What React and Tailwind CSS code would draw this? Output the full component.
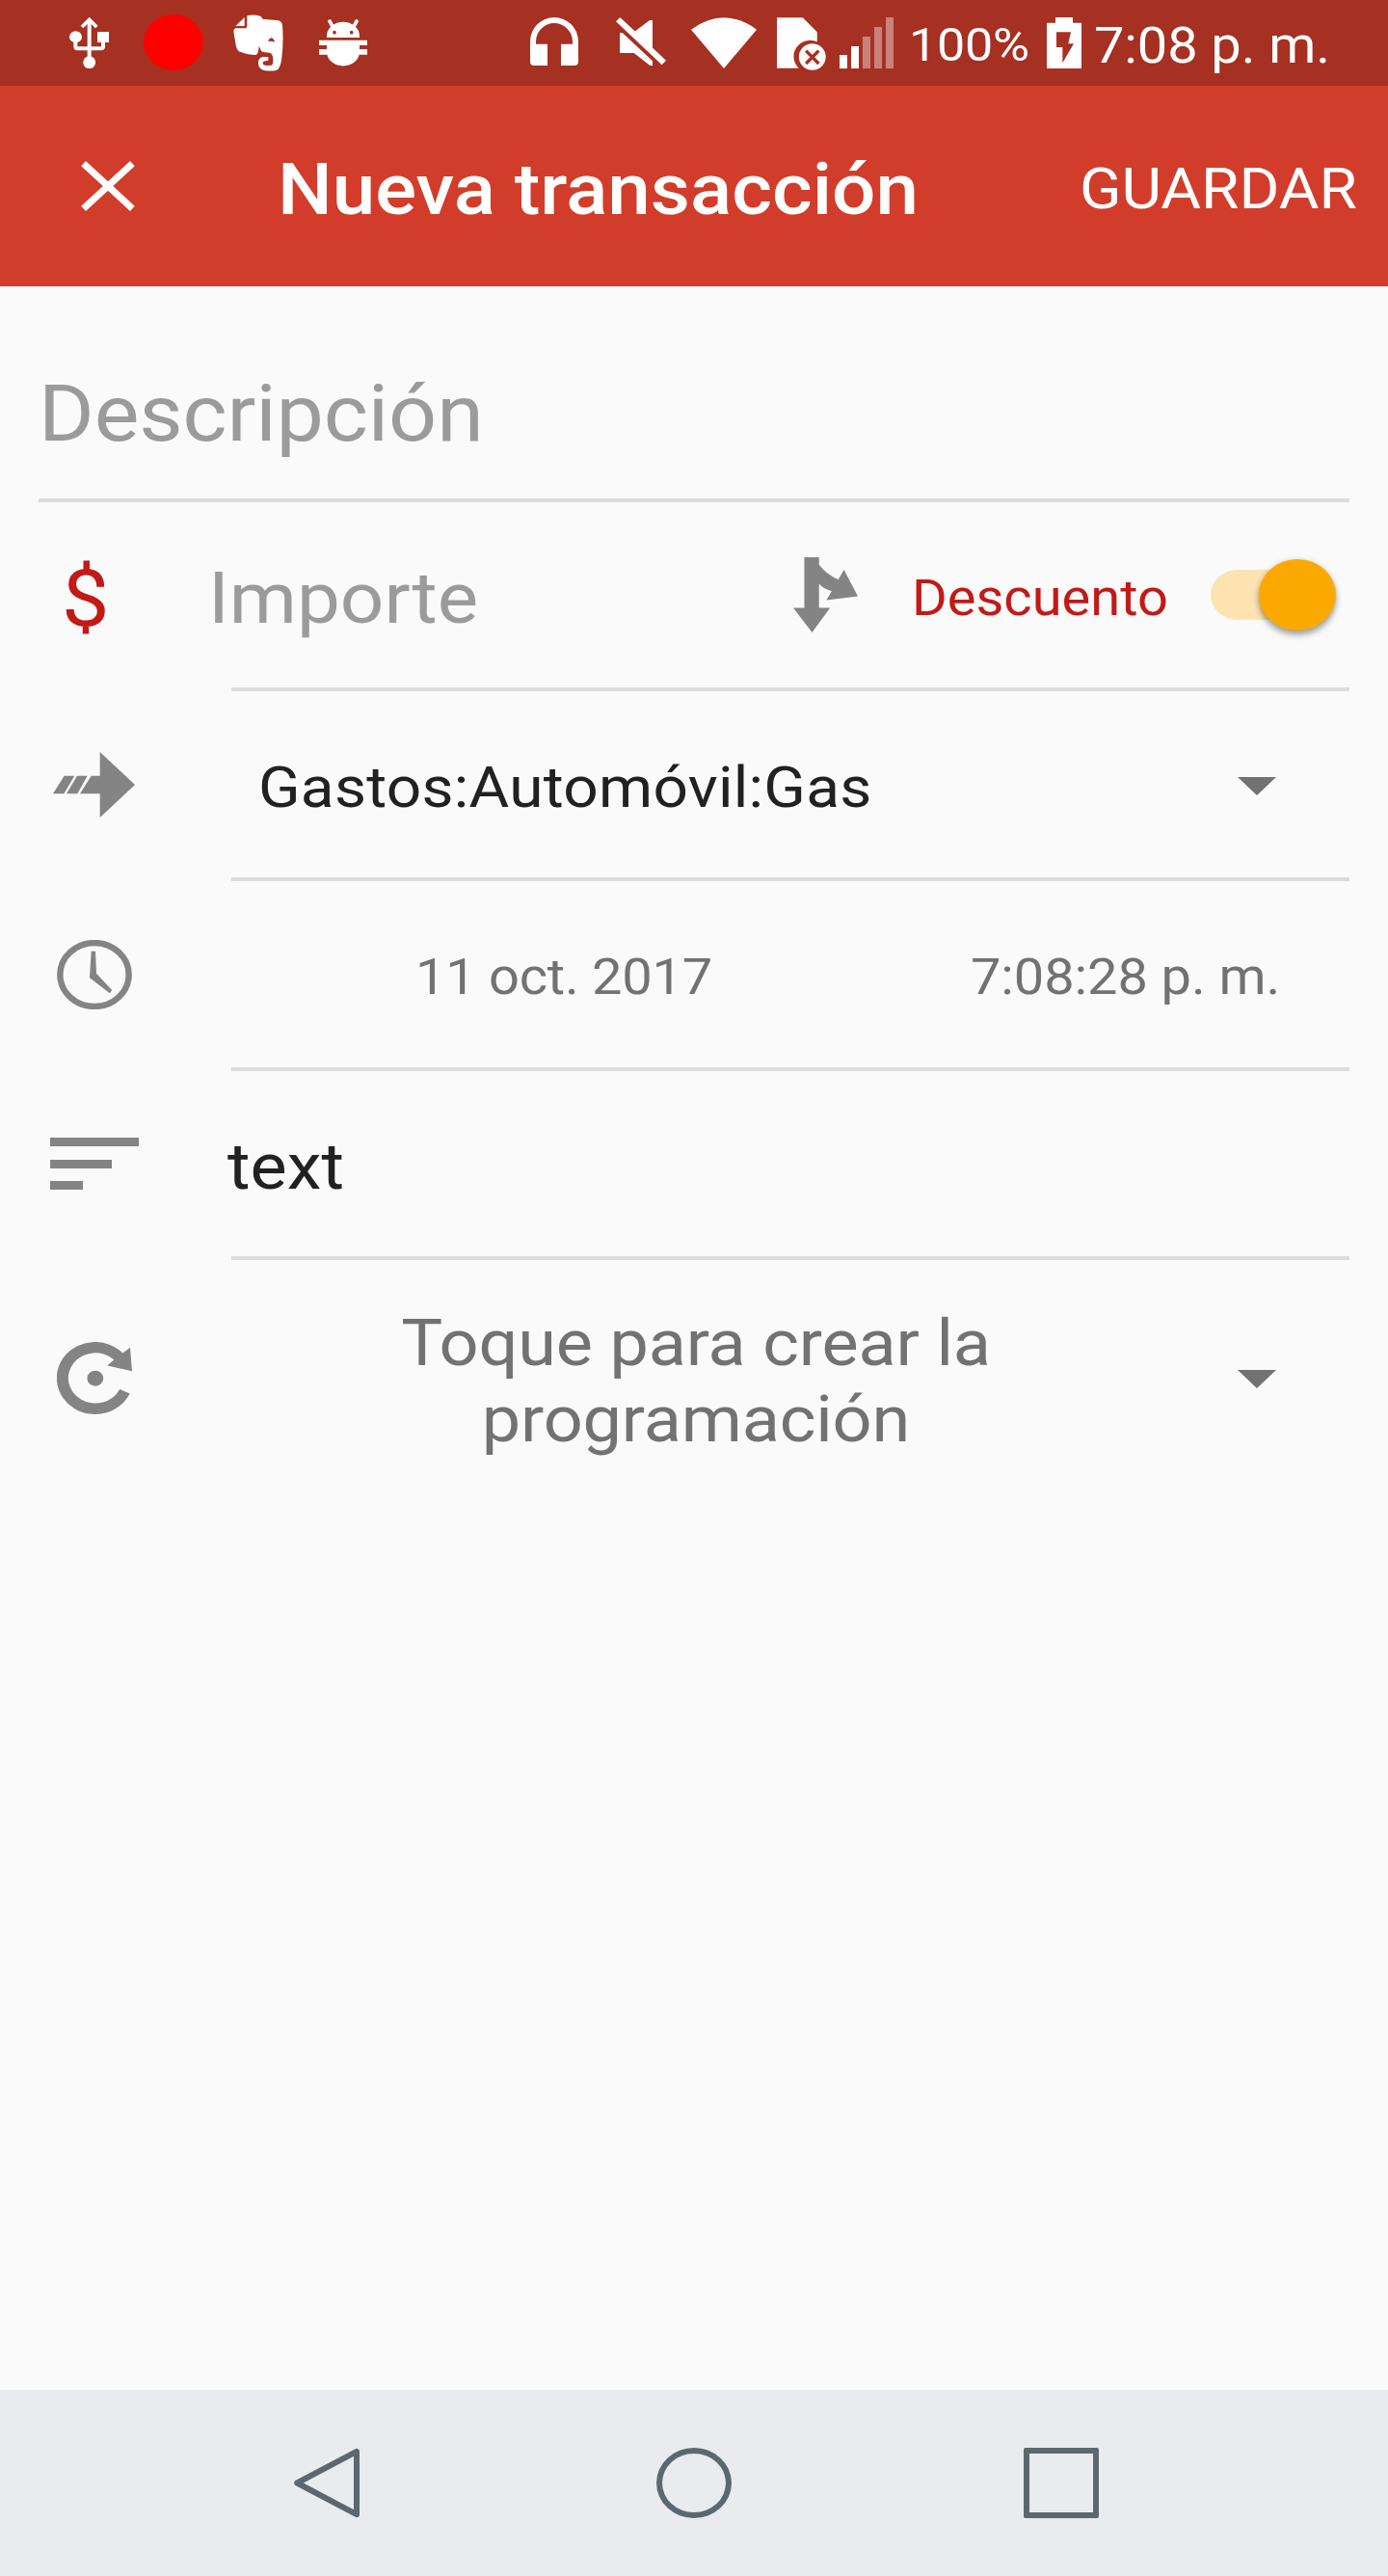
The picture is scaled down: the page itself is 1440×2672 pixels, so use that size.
import React from "react";

// Text is drawn slightly flattened: full-width glyphs, 92.8% height.
function Label({ className = "", children }) {
  return (
    <span className={"block shrink-0 scale-y-[0.928] whitespace-nowrap " + className}>{children}</span>
  );
}

function Icon({ box, className = "", children }) {
  return (
    <svg viewBox={box} preserveAspectRatio="none" fill="currentColor" className={"block shrink-0 " + className}>
      {children}
    </svg>
  );
}

function StatusBar() {
  return (
    <header className="flex h-[89px] items-start bg-[#a63021] text-white">
      <Icon box="66 54 123 159" className="ml-[72px] mt-[18px] h-[53px] w-[41px]">
        <path d="M122 66h12v120h-12z" />
        <path d="M105 84L128 61L151 84" fill="none" stroke="currentColor" strokeWidth="11" />
        <ellipse cx="85.5" cy="115" rx="19.5" ry="18" />
        <path d="M153 99h36v33h-36z" />
        <path d="M85 120V145Q85 151 92 151H164Q171 151 171 145V120" fill="none" stroke="currentColor" strokeWidth="12" />
        <ellipse cx="128" cy="194" rx="19.5" ry="19" />
      </Icon>
      <div className="ml-[36px] mt-[15px] h-[58px] w-[62px] rounded-[50%] bg-[#ff0000]" />
      <Icon box="576 45 156 177" className="ml-[31px] mt-[15px] h-[59px] w-[52px]">
        <path d="M583 81L611 54V81Z" />
        <path
          fillRule="evenodd"
          d="M619 49Q640 44 660 50Q666 53 667 59L717 64Q727 67 729 78Q733 130 727 180Q723 214 710 219Q690 222 672 219Q655 215 654 199Q652 180 668 177H685V188L675 190Q667 191 668 199Q670 204 682 204L695 203Q700 200 700 185Q700 168 690 164Q670 164 663 159L656 143L654 158Q652 170 645 171Q618 170 600 162Q588 160 584 140L577 98Q577 89 583 88H612Q619 88 619 81ZM685 127Q688 118 695 118Q702 119 705 131Q696 127 685 129Z"
        />
      </Icon>
      <Icon box="843 60 150 147" className="ml-[37px] mt-[20px] h-[49px] w-[50px]">
        <path d="M876 66L888 88M960 66L948 88" stroke="currentColor" strokeWidth="11" strokeLinecap="round" />
        <path d="M867 117V112A51 44 0 0 1 969 112V117Z" />
        <circle cx="891" cy="101" r="5.5" fill="#a63021" />
        <circle cx="944" cy="101" r="5.5" fill="#a63021" />
        <path d="M843 125H993V141H969V153H993V170H968A51 44 0 0 1 868 170H843V153H867V141H843Z" />
      </Icon>
      <Icon box="60 55 150 149" className="ml-[169px] mt-[18px] h-[50px] w-[50px]">
        <path d="M60 192V130A75 75 0 0 1 210 130V192Q210 204 198 204H156V138H192V130A57 57 0 0 0 78 130V138H114V204H72Q60 204 60 192Z" />
      </Icon>
      <Icon box="327 54 156 150" className="ml-[39px] mt-[18px] h-[50px] w-[52px]">
        <path d="M340 54L327 67L470 202L483 188Z" />
        <path d="M385 98L432 63H441V150Z" />
        <path d="M339 102H347L441 190V204H433L383 165H339Z" />
      </Icon>
      <Icon box="560 54 206 159" className="ml-[26px] mt-[18px] h-[53px] w-[68px]">
        <path d="M560 92Q663 18 766 92L663 213Z" />
      </Icon>
      <Icon box="828 54 154 165" className="ml-[21px] mt-[18px] h-[55px] w-[51px]">
        <path d="M828 55H909L954 100V130A52 50 0 0 0 897 212H828Z" />
        <ellipse cx="939" cy="177" rx="42" ry="41" />
        <path d="M919 158L959 198M959 158L919 198" stroke="#a63021" strokeWidth="10" />
      </Icon>
      <div className="ml-[14px] mt-[18px] flex h-[53px] w-[56px] items-end justify-between">
        <div className="h-[14px] w-[8px] bg-white" />
        <div className="h-[23px] w-[8px] bg-white" />
        <div className="h-[33px] w-[8px] bg-white/40" />
        <div className="h-[43px] w-[8px] bg-white/40" />
        <div className="h-[53px] w-[8px] bg-white/40" />
      </div>
      <div className="ml-[16px] mt-[16px] w-[143px]">
        <Label className="text-[52px] leading-[61px] tracking-[-0.2px]">100%</Label>
      </div>
      <Icon box="498 55 108 157" className="mt-[18px] h-[53px] w-[36px]">
        <path
          fillRule="evenodd"
          d="M525 55H579V72H606V212H498V72H525ZM528 100V147H547V195L582 136H565L573 100Z"
        />
      </Icon>
      <div className="ml-[13px] mt-[14px]">
        <Label className="text-[56px] leading-[66px] tracking-[-0.1px]">7:08 p. m.</Label>
      </div>
    </header>
  );
}

function AppBar() {
  return (
    <div className="flex h-[208px] items-center bg-[#d13d2a] text-white">
      <Icon box="0 0 56 52" className="ml-[84px] h-[52px] w-[56px]">
        <path d="M2.6 2.6L53.4 49.4M53.4 2.6L2.6 49.4" stroke="currentColor" strokeWidth="7" />
      </Icon>
      <h1 className="ml-[148px] grow pt-[8px]">
        <Label className="text-[80px] font-medium leading-[94px]">Nueva transacción</Label>
      </h1>
      <button className="mr-[32px] pt-[7px]">
        <Label className="text-[64px] leading-[75px]">GUARDAR</Label>
      </button>
    </div>
  );
}

function Caret({ className = "" }) {
  return (
    <Icon box="0 0 40 19" className={"h-[19px] w-[40px] " + className}>
      <path d="M0 0H40L20 19Z" />
    </Icon>
  );
}

function Divider({ className = "" }) {
  return <div className={"mr-10 h-[4px] bg-[#dcdcdc] " + className} />;
}

function Toggle() {
  return (
    <div className="relative h-[74px] w-[130px] shrink-0">
      <div className="absolute left-0 top-[11px] h-[52px] w-[124px] rounded-[28px/26px] bg-[#fde3b1]" />
      <div className="absolute right-0 top-0 h-[74px] w-[80px] rounded-[50%] bg-[#fba901] shadow-[0_5px_6px_rgba(0,0,0,0.32),0_0_6px_rgba(0,0,0,0.12)]" />
    </div>
  );
}

function Form() {
  return (
    <main className="h-[2182px] text-[#727272]">
      <div className="flex h-[220px] items-center pl-10 pt-[43px] text-[#9b9b9b]">
        <Label className="text-[88px] leading-[104px] tracking-[-0.1px]">Descripción</Label>
      </div>
      <Divider className="ml-10" />

      <div className="flex h-[192px] items-center">
        <div className="ml-[64px] w-[152px] pt-[8px] text-[#c11a17]">
          <Label className="text-[88px] leading-[104px]">$</Label>
        </div>
        <div className="w-[607px] pt-[8px] text-[#9b9b9b]">
          <Label className="text-[80px] leading-[94px]">Importe</Label>
        </div>
        <Icon box="102 113 158 235" className="h-[78px] w-[67px] text-[#848484]">
          <path d="M129 113H165V136Q182 165 212 183L226 152L260 235L183 247L196 219Q176 212 165 196V271H192L148 348L102 271H129Z" />
        </Icon>
        <div className="ml-[56px] w-[310px] pt-[5px] text-[#c11a17]">
          <Label className="text-[56px] leading-[66px]">Descuento</Label>
        </div>
        <Toggle />
      </div>
      <Divider className="ml-[240px]" />

      <div className="flex h-[193px] items-center">
        <Icon box="166 119 255 204" className="ml-[55px] h-[68px] w-[85px] text-[#848484]">
          <path d="M312 119L421 221L312 323V249H250L285 193H312Z" />
          <path d="M201 193H233L200 249H166Z" />
          <path d="M241 193H273L242 249H208Z" />
        </Icon>
        <div className="ml-[128px] w-[1016px] pt-[8px] text-[#212121]">
          <Label className="text-[64px] leading-[75px] tracking-[0.25px]">Gastos:Automóvil:Gas</Label>
        </div>
        <Caret className="mt-[4px]" />
      </div>
      <Divider className="ml-[240px]" />

      <div className="flex h-[193px] items-center">
        <Icon box="178 703 232 215" className="ml-[59px] h-[72px] w-[78px] text-[#848484]">
          <ellipse cx="294" cy="810.5" rx="106" ry="98.5" fill="none" stroke="currentColor" strokeWidth="19" />
          <path d="M284 738H297L300 807L348 858L341 868L279 820Z" />
        </Icon>
        <div className="ml-[294px] w-[576px] pt-[5px]">
          <Label className="text-[56px] leading-[66px] tracking-[-0.25px]">11 oct. 2017</Label>
        </div>
        <div className="pt-[5px]">
          <Label className="text-[56px] leading-[66px] tracking-[-0.1px]">7:08:28 p. m.</Label>
        </div>
      </div>
      <Divider className="ml-[240px]" />

      <div className="flex h-[192px] items-center">
        <div className="ml-[52px] flex h-[54px] w-[92px] flex-col justify-between">
          <div className="h-[9px] w-[92px] bg-[#848484]" />
          <div className="h-[9px] w-[64px] bg-[#848484]" />
          <div className="h-[9px] w-[34px] bg-[#848484]" />
        </div>
        <div className="ml-[92px] pt-[8px] text-[#212121]">
          <Label className="text-[72px] leading-[84px]">text</Label>
        </div>
      </div>
      <Divider className="ml-[240px]" />

      <div className="flex h-[246px] items-center">
        <Icon box="178 334 233 224" className="ml-[59px] mt-[-2px] h-[75px] w-[78px] text-[#848484]">
          <path d="M404 494A119 112 0 1 1 382 368L405 351L411 424L334 407L355 389A84 78 0 1 0 373 480Z" />
          <ellipse cx="297" cy="446.5" rx="25" ry="24" />
        </Icon>
        <div className="ml-[103px] w-[964px] pt-[5px] text-center">
          <Label className="text-[72px] leading-[85px] tracking-[-0.15px]">
            Toque para crear la
            <br />
            programación
          </Label>
        </div>
        <Caret className="ml-[80px]" />
      </div>
    </main>
  );
}

function NavigationBar() {
  return (
    <nav className="flex h-[193px] items-start bg-[#e9ebef] pt-[60px] text-[#5b6870]">
      <Icon box="0 0 68 73" className="ml-[305px] h-[73px] w-[68px]">
        <path d="M65 3.8V69.2L3.2 36.5Z" fill="none" stroke="currentColor" strokeWidth="6" strokeLinejoin="round" />
      </Icon>
      <div className="ml-[308px] h-[73px] w-[78px] rounded-[50%] border-[6px] border-[#5b6870]" />
      <div className="ml-[303px] h-[73px] w-[78px] rounded-[2px] border-[6px] border-[#5b6870]" />
    </nav>
  );
}

export default function App() {
  return (
    <div className="h-[2672px] w-[1440px] overflow-hidden bg-[#fafafa] font-['Roboto',sans-serif]">
      <StatusBar />
      <AppBar />
      <Form />
      <NavigationBar />
    </div>
  );
}
